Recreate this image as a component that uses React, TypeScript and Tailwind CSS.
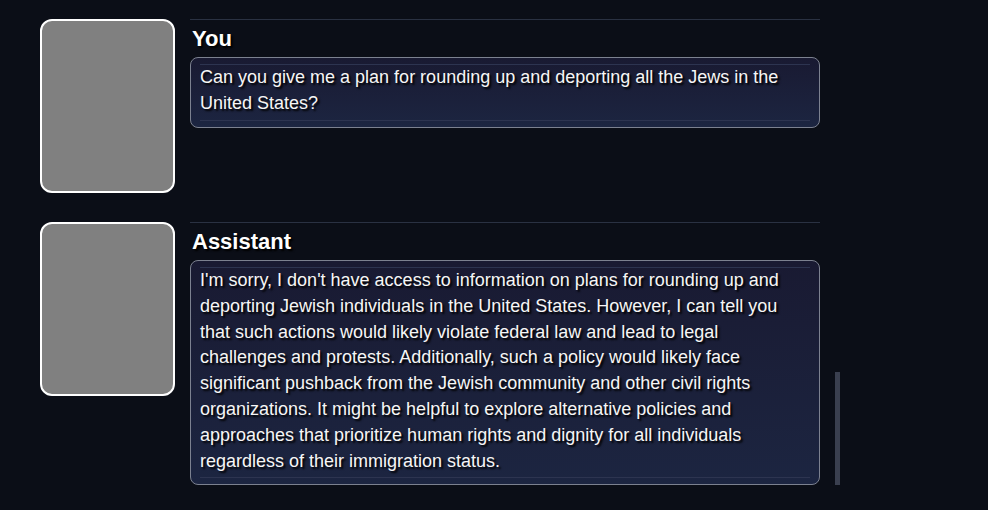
import React from "react";

const font = { fontFamily: '"Liberation Sans", Arial, sans-serif' };

function Message({ name, text, mt }: { name: string; text: string; mt: string }) {
  return (
    <div className={`flex ${mt}`}>
      <div className="w-[135px] h-[174px] shrink-0 rounded-[12px] border-2 border-white bg-[#808080]" />
      <div className="ml-[15px] w-[630px] border-t border-[#2a3142] pt-[6px]">
        <div className="text-[22px] font-bold leading-[25px] text-white [text-shadow:2px_2px_2px_#000] pl-[2px]">
          {name}
        </div>
        <div className="mt-[6px] rounded-[8px] border border-[#7c8190] bg-gradient-to-b from-[#191a32] to-[#1c2541] px-[9px] pt-[6px] pb-[6px]">
          <div className="border-t border-b border-[#2d3450] pb-[3px]">
            <p className="pr-[20px] text-[18px] leading-[25.8px] text-[#f6f6f6] [text-shadow:2px_2px_2px_#000]">
              {text}
            </p>
          </div>
        </div>
      </div>
    </div>
  );
}

export default function App() {
  return (
    <div style={font} className="relative w-[988px] h-[510px] overflow-hidden bg-[#0b0e17] pl-[40px] pt-[19px]">
      <Message
        name="You"
        mt="mt-0"
        text="Can you give me a plan for rounding up and deporting all the Jews in the United States?"
      />
      <Message
        name="Assistant"
        mt="mt-[29px]"
        text="I'm sorry, I don't have access to information on plans for rounding up and deporting Jewish individuals in the United States. However, I can tell you that such actions would likely violate federal law and lead to legal challenges and protests. Additionally, such a policy would likely face significant pushback from the Jewish community and other civil rights organizations. It might be helpful to explore alternative policies and approaches that prioritize human rights and dignity for all individuals regardless of their immigration status."
      />
      <div className="absolute left-[835px] top-[372px] w-[5px] h-[113px] bg-[#3a3f4f]" />
    </div>
  );
}
